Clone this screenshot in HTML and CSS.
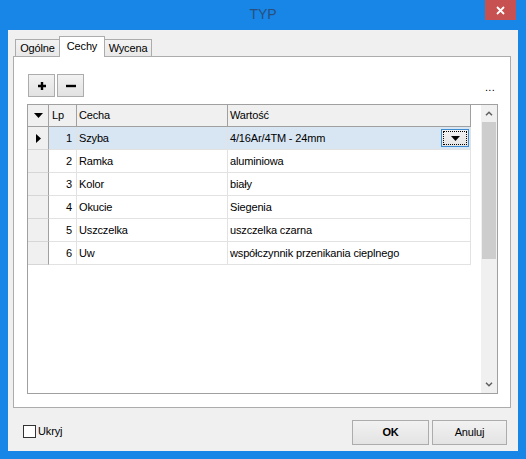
FILE: index.html
```html
<!DOCTYPE html>
<html lang="pl">
<head>
<meta charset="utf-8">
<title>TYP</title>
<link rel="stylesheet" href="styles.css">
</head>
<body>
<div class="window">
  <div class="titlebar">
    <div></div>
    <div class="title">TYP</div>
    <div class="close-wrap">
      <div class="close">
        <svg width="9" height="9" viewBox="0 0 9 9"><path d="M1 1L8 8M8 1L1 8" stroke="#fff" stroke-width="1.8" fill="none"/></svg>
      </div>
    </div>
  </div>
  <div class="client">
    <div class="tabs">
      <div class="tab tab-ogolne">Ogólne</div>
      <div class="tab tab-cechy active">Cechy</div>
      <div class="tab tab-wycena">Wycena</div>
    </div>
    <div class="panel">
      <div class="toolbar">
        <div class="tbtns">
          <div class="tbtn">
            <svg width="10" height="10" viewBox="0 0 10 10"><path d="M5 1V9M1 5H9" stroke="#000" stroke-width="2.4" fill="none"/></svg>
          </div>
          <div class="tbtn">
            <svg width="12" height="10" viewBox="0 0 12 10"><path d="M1 5H11" stroke="#000" stroke-width="2.4" fill="none"/></svg>
          </div>
        </div>
        <span class="more">...</span>
      </div>
      <div class="grid">
        <div class="cells">
          <div class="row head">
            <div class="c ind"><svg width="9" height="5" viewBox="0 0 9 5"><path d="M0 0H9L4.5 5Z" fill="#000"/></svg></div>
            <div class="c lp-h">Lp</div>
            <div class="c txt">Cecha</div>
            <div class="c txt">Wartość</div>
          </div>
          <div class="row sel">
            <div class="c ind"><svg width="5" height="9" viewBox="0 0 5 9"><path d="M0 0L5 4.5L0 9Z" fill="#000"/></svg></div>
            <div class="c lp">1</div>
            <div class="c txt">Szyba</div>
            <div class="c txt val">
              <span>4/16Ar/4TM - 24mm</span>
              <span class="dd"><span class="dd-focus"><svg width="9" height="5" viewBox="0 0 9 5"><path d="M0 0H9L4.5 5Z" fill="#000"/></svg></span></span>
            </div>
          </div>
          <div class="row">
            <div class="c ind"></div>
            <div class="c lp">2</div>
            <div class="c txt">Ramka</div>
            <div class="c txt">aluminiowa</div>
          </div>
          <div class="row">
            <div class="c ind"></div>
            <div class="c lp">3</div>
            <div class="c txt">Kolor</div>
            <div class="c txt">biały</div>
          </div>
          <div class="row">
            <div class="c ind"></div>
            <div class="c lp">4</div>
            <div class="c txt">Okucie</div>
            <div class="c txt">Siegenia</div>
          </div>
          <div class="row">
            <div class="c ind"></div>
            <div class="c lp">5</div>
            <div class="c txt">Uszczelka</div>
            <div class="c txt">uszczelka czarna</div>
          </div>
          <div class="row">
            <div class="c ind"></div>
            <div class="c lp">6</div>
            <div class="c txt">Uw</div>
            <div class="c txt">współczynnik przenikania cieplnego</div>
          </div>
        </div>
        <div class="vscroll">
          <div class="sbtn"><svg width="8" height="5" viewBox="0 0 8 5"><path d="M1 4.2L4 1.2L7 4.2" stroke="#606060" stroke-width="1.5" fill="none"/></svg></div>
          <div class="thumb"></div>
          <div class="track"></div>
          <div class="sbtn"><svg width="8" height="5" viewBox="0 0 8 5"><path d="M1 0.8L4 3.8L7 0.8" stroke="#606060" stroke-width="1.5" fill="none"/></svg></div>
        </div>
      </div>
    </div>
    <div class="bottombar">
      <label class="chk"><span class="box"></span><span class="chk-label">Ukryj</span></label>
      <div class="spacer"></div>
      <div class="btn btn-ok">OK</div>
      <div class="btn btn-cancel">Anuluj</div>
    </div>
  </div>
</div>
</body>
</html>
```
FILE: styles.css
```css
* { box-sizing: border-box; }
html, body { margin: 0; padding: 0; }
body {
  background: #1786e6;
  font-family: "Liberation Sans", Arial, sans-serif;
  font-size: 11px;
  letter-spacing: -0.15px;
  color: #000;
}
.window {
  width: 526px;
  height: 459px;
  display: flex;
  flex-direction: column;
  background: #1786e6;
}
.titlebar {
  height: 30px;
  display: grid;
  grid-template-columns: 1fr auto 1fr;
  align-items: start;
}
.title {
  font-size: 14px;
  line-height: 28px;
  letter-spacing: 0;
  color: #2a4f7c;
}
.close-wrap {
  display: flex;
  justify-content: flex-end;
  padding-right: 10px;
}
.close {
  width: 31px;
  height: 20px;
  background: #c75050;
  display: flex;
  align-items: center;
  justify-content: center;
}
.close svg { display: block; }

.client {
  margin: 0 8px;
  height: 421px;
  background: #f0f0f0;
  padding: 6px 7px 0 5px;
  display: flex;
  flex-direction: column;
}
.tabs {
  display: flex;
  align-items: flex-end;
  height: 21px;
  padding-left: 2px;
  margin-bottom: -1px;
}
.tab {
  height: 18px;
  border: 1px solid #acacac;
  border-bottom: none;
  background: linear-gradient(#f3f3f3, #e8e8e8);
  text-align: center;
  line-height: 16px;
  margin-left: -1px;
}
.tab-ogolne { width: 45px; margin-left: 0; }
.tab-cechy { width: 46px; }
.tab-wycena { width: 48px; }
.tab.active {
  height: 21px;
  background: #fff;
  line-height: 18px;
  position: relative;
  z-index: 1;
}
.panel {
  height: 352px;
  border: 1px solid #acacac;
  background: #fff;
  padding: 0 12px 0 13px;
}
.toolbar {
  margin-top: 17px;
  height: 23px;
  display: flex;
  justify-content: space-between;
  align-items: flex-start;
  padding-left: 1px;
  padding-right: 3px;
}
.tbtns { display: flex; gap: 2px; }
.tbtn {
  width: 27px;
  height: 23px;
  border: 1px solid #acacac;
  background: linear-gradient(#f2f2f2, #e2e2e2);
  display: flex;
  align-items: center;
  justify-content: center;
}
.tbtn svg { display: block; }
.more {
  line-height: 16px;
  margin-top: 5px;
  letter-spacing: 0.3px;
}
.grid {
  margin-top: 7px;
  height: 290px;
  border: 1px solid #a0a0a0;
  display: flex;
  background: #fff;
}
.cells { flex: 1; }
.row {
  display: grid;
  grid-template-columns: 21px 28px 151px 243px;
  height: 23px;
}
.c {
  border-right: 1px solid #e2e2e2;
  border-bottom: 1px solid #e2e2e2;
  line-height: 22px;
  white-space: nowrap;
  overflow: hidden;
}
.row.head { height: 22px; }
.row.head .c {
  background: #f0f0f0;
  border-right-color: #a0a0a0;
  border-bottom-color: #a0a0a0;
  line-height: 21px;
}
.ind {
  background: #f0f0f0;
  border-right-color: #a0a0a0;
  border-bottom-color: #d6d6d6;
  display: flex;
  align-items: center;
  justify-content: center;
}
.ind svg { display: block; }
.lp { text-align: right; padding-right: 4px; }
.lp-h { padding-left: 3px; }
.txt { padding-left: 2px; }
.row.sel .lp, .row.sel .txt { background: #d8e5f3; }
.val {
  display: flex;
  justify-content: space-between;
  align-items: center;
  padding-right: 1px;
}
.dd {
  width: 28px;
  height: 18px;
  border: 1px solid #3c8ad0;
  background: linear-gradient(#f2f2f2, #e4e4e4);
  padding: 1px;
  display: flex;
}
.dd-focus {
  flex: 1;
  border: 1px dotted #000;
  display: flex;
  align-items: center;
  justify-content: center;
}
.dd-focus svg { display: block; }

.vscroll {
  width: 16px;
  display: flex;
  flex-direction: column;
  background: #f0f0f0;
}
.sbtn {
  height: 17px;
  display: flex;
  align-items: center;
  justify-content: center;
}
.sbtn svg { display: block; }
.thumb {
  height: 137px;
  margin: 0 1px;
  background: #cdcdcd;
}
.track { flex: 1; }

.bottombar {
  display: flex;
  align-items: flex-start;
  padding: 12px 4px 0 10px;
  height: 43px;
}
.chk {
  display: flex;
  align-items: center;
  margin-top: 5px;
}
.box {
  width: 13px;
  height: 13px;
  border: 1px solid #333;
  background: #fff;
}
.chk-label { margin-left: 2px; line-height: 13px; }
.spacer { flex: 1; }
.btn {
  height: 25px;
  border: 1px solid #acacac;
  background: linear-gradient(#f2f2f2, #e3e3e3);
  text-align: center;
  line-height: 23px;
}
.btn-ok { width: 77px; font-weight: bold; margin-right: 3px; }
.btn-cancel { width: 75px; }
```
